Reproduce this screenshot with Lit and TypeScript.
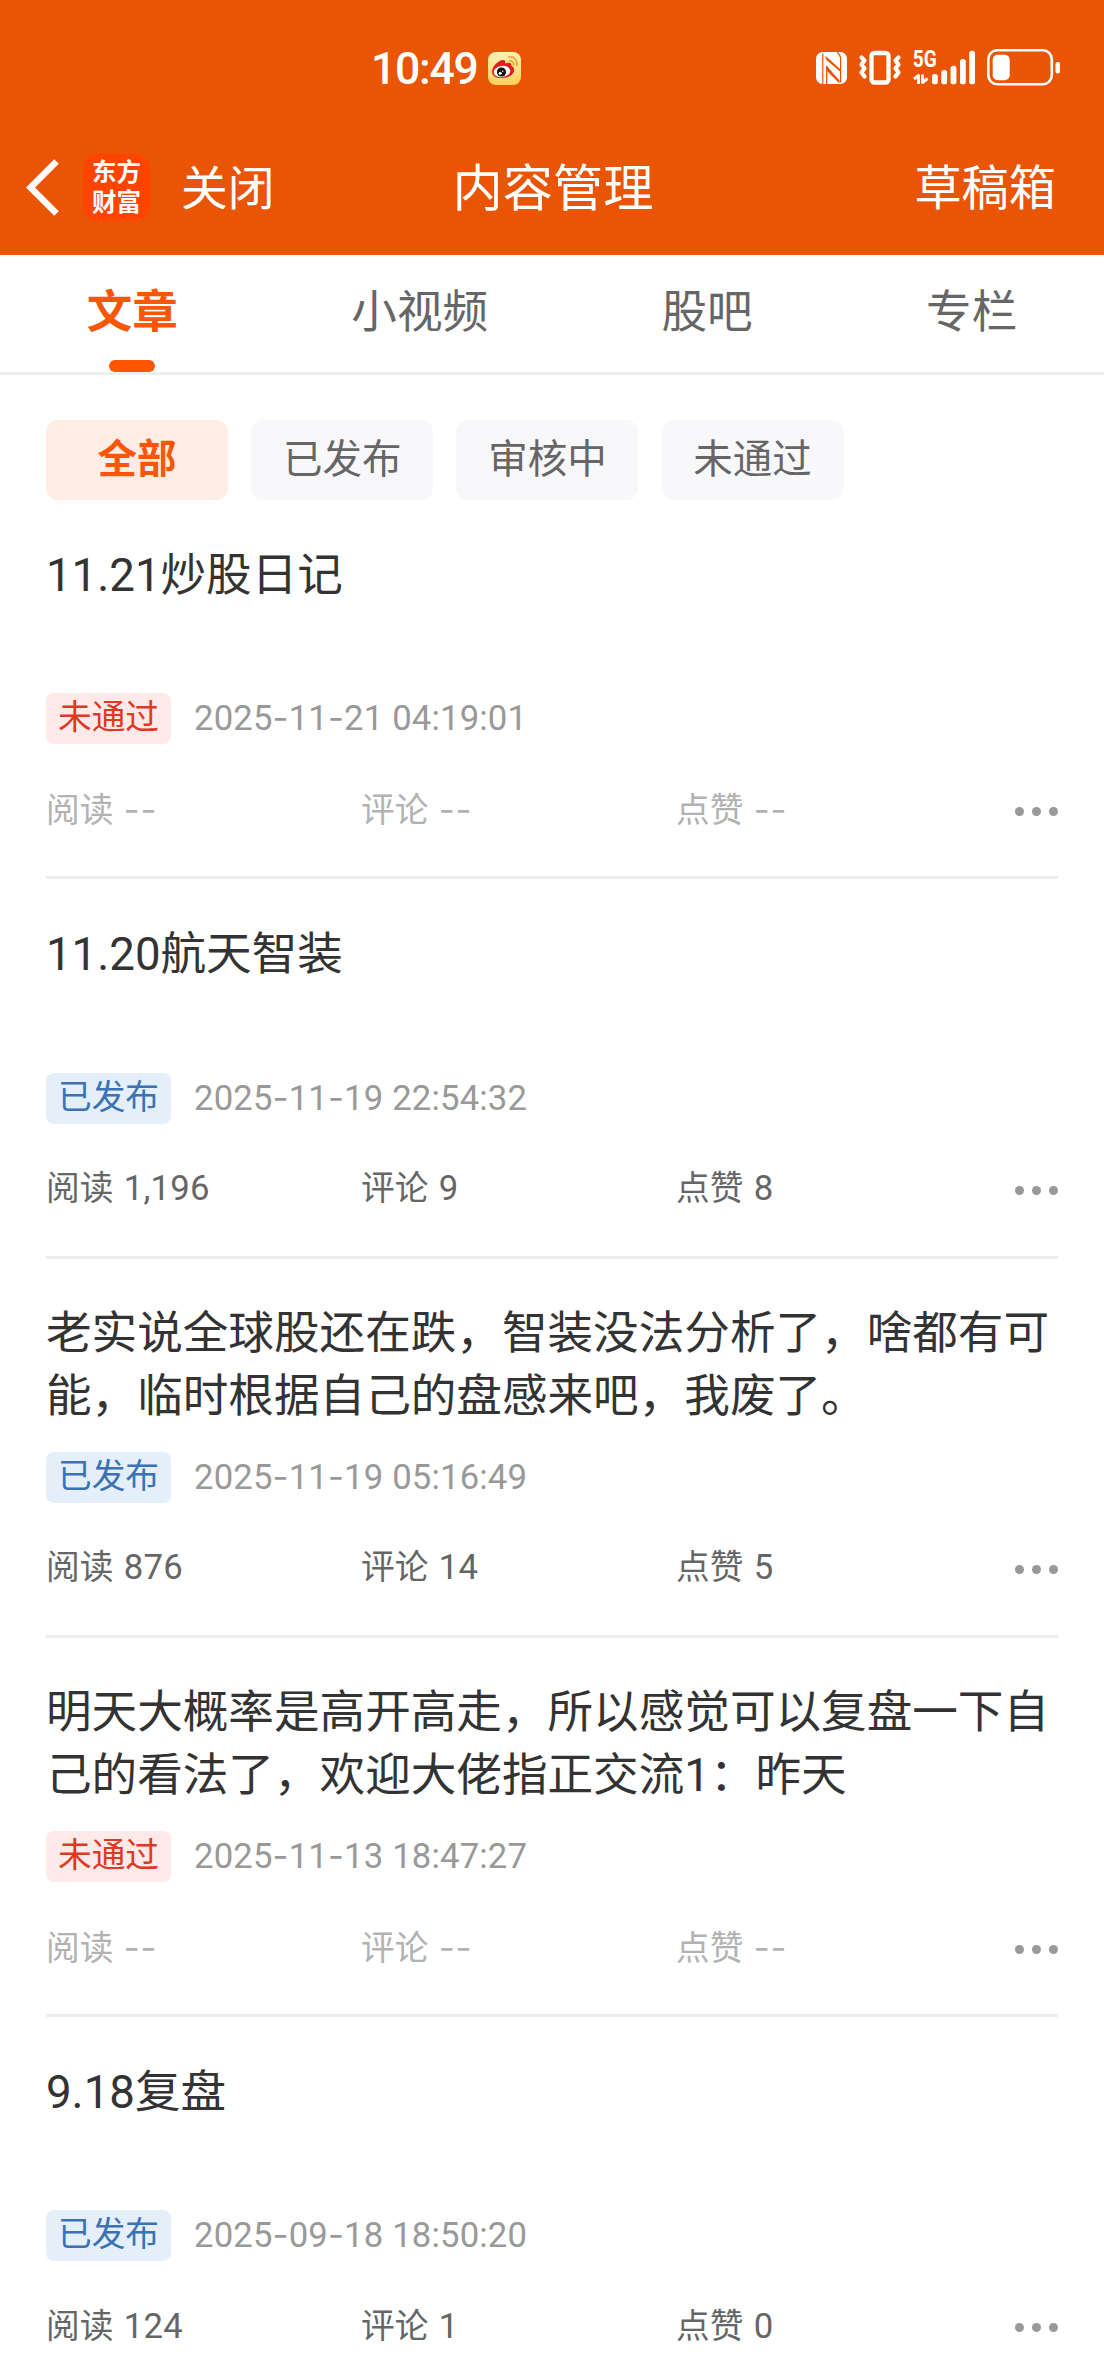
import { LitElement, html, css, svg } from "lit";
import { customElement, property } from "lit/decorators.js";
import { classMap } from "lit/directives/class-map.js";

interface Article {
  title: string;
  status: "rejected" | "published";
  time: string;
  reads: string;
  comments: string;
  likes: string;
}

const ARTICLES: Article[] = [
  { title: "11.21炒股日记", status: "rejected", time: "2025-11-21 04:19:01", reads: "--", comments: "--", likes: "--" },
  { title: "11.20航天智装", status: "published", time: "2025-11-19 22:54:32", reads: "1,196", comments: "9", likes: "8" },
  {
    title: "老实说全球股还在跌，智装没法分析了，啥都有可能，临时根据自己的盘感来吧，我废了。",
    status: "published", time: "2025-11-19 05:16:49", reads: "876", comments: "14", likes: "5",
  },
  {
    title: "明天大概率是高开高走，所以感觉可以复盘一下自己的看法了，欢迎大佬指正交流1：昨天",
    status: "rejected", time: "2025-11-13 18:47:27", reads: "--", comments: "--", likes: "--",
  },
  { title: "9.18复盘", status: "published", time: "2025-09-18 18:50:20", reads: "124", comments: "1", likes: "0" },
];

const STATUS_LABEL = { rejected: "未通过", published: "已发布" };

/* Hyphens are set in a face with a wider dash than the digits' own. */
const figures = (text: string) =>
  text.split(/(-)/).filter(Boolean).map((part) => (part === "-" ? html`<span class="dash">-</span>` : part));

@customElement("status-bar")
class StatusBar extends LitElement {
  static styles = css`
    :host { display: flex; height: 120px; }
    .time {
      margin: 42px 0 0 371px; height: 54px; line-height: 54px; width: 117px;
      font-size: 44.500px; font-weight: 500; letter-spacing: -1.300px; white-space: nowrap;
    }
    .weibo { margin-top: 52px; width: 33px; height: 33px; flex: none; }
    .system { margin: 46px 0 0 293px; width: 250px; height: 42px; flex: none; }
    svg { display: block; }
    .net { font: 700 23px Roboto, sans-serif; }
  `;

  render() {
    const bars = [
      [932, 74], [941.3, 70], [950.6, 65.7], [960, 59], [969.2, 50.8],
    ];
    return html`
      <div class="time">10:49</div>
      <svg class="weibo" viewBox="0 0 33 33">
        <defs>
          <linearGradient id="g" x1="0" y1="0" x2="0" y2="1">
            <stop offset="0" stop-color="#fff0b8" /><stop offset="1" stop-color="#fdd05c" />
          </linearGradient>
        </defs>
        <rect width="33" height="33" rx="8" fill="url(#g)" />
        <path d="M4 20C4 14 11 8 15 8c2.500 0 2.500 2 2 3.500 3-1.300 7-1.500 6.500 2.500 5 2 3.500 11-9 12C8.500 26.500 4 24 4 20z" fill="#e01f1c" />
        <ellipse cx="14" cy="19.500" rx="8.300" ry="5.600" fill="#fff" transform="rotate(-8 14 19.500)" />
        <circle cx="13.500" cy="20" r="4.600" fill="#111" />
        <circle cx="12.200" cy="21.300" r="1.500" fill="#fff" />
        <circle cx="14.800" cy="19.300" r=".7" fill="#fff" />
        <path d="M21.500 9c2.800-.4 4.500 1.700 3.800 4.500M21 5c4.800-1 8.700 3.300 7.700 8.300" fill="none" stroke="#f3ae3b" stroke-width="2" stroke-linecap="round" />
      </svg>
      <svg class="system" viewBox="814 46 250 42">
        <rect x="816" y="52" width="31" height="32" rx="6.500" fill="#fff" />
        <path d="M822.800 53.500V84M840.600 82.500V58q-.3-3-3.800-6.500" fill="none" stroke="#e95504" stroke-width="1.200" />
        <path d="M825.200 55.500L840.600 69.500V72L826.500 60zM826.500 65.500L839.500 80.500V83.500L826.500 70.500z" fill="#e95504" />
        <path d="M826.700 66V84" fill="none" stroke="#e95504" stroke-width="1.300" />
        <rect x="871.500" y="53" width="17" height="29.500" rx="3" fill="none" stroke="#fff" stroke-width="4.300" />
        <path d="M861.500 57.500l3 3-3 4 3 4-3 4 3 4M898.500 57.500l-3 3 3 4-3 4 3 4-3 4" fill="none" stroke="#fff" stroke-width="4.200" stroke-linecap="round" stroke-linejoin="round" />
        <text class="net" x="912.800" y="67.300" fill="#fff" textLength="24" lengthAdjust="spacingAndGlyphs">5G</text>
        <path d="M914 79l4.500-3.500V84M922.500 74.500v8l5-4" fill="none" stroke="#fff" stroke-width="2.900" stroke-linejoin="round" />
        ${bars.map(([x, y]) => svg`<rect x=${x} y=${y} width="5.800" height=${84.3 - y} rx="2.600" fill="#fff" />`)}
        <rect x="988.300" y="50.300" width="63.500" height="34" rx="9" fill="none" stroke="#fff" stroke-width="2.600" />
        <rect x="992.700" y="54.700" width="17" height="25.600" rx="5" fill="#fff" />
        <rect x="1055.500" y="62" width="4.500" height="11.500" rx="2" fill="#fff" />
      </svg>
    `;
  }
}

@customElement("nav-bar")
class NavBar extends LitElement {
  static styles = css`
    :host { display: grid; grid-template-columns: 1fr auto 1fr; align-items: center; height: 135px; padding: 0 48px 0 26px; }
    .left { display: flex; align-items: center; }
    .back { width: 34px; height: 58px; display: block; }
    .logo {
      margin-left: 23px; width: 67px; height: 67px; border-radius: 15px; background: #ff4400;
      display: flex; flex-direction: column; justify-content: center; align-items: center;
      font-size: 24.500px; font-weight: 700; line-height: 29.500px;
    }
    .close { margin-left: 31px; font-size: 46.800px; }
    .title { font-size: 50.200px; margin-left: 24px; }
    .drafts { justify-self: end; font-size: 47.200px; }
    .close, .title, .drafts { line-height: 60px; padding-top: 2px; white-space: nowrap; }
  `;

  render() {
    return html`
      <div class="left">
        <svg class="back" viewBox="0 0 34 58">
          <path d="M30.500 2.500L4.500 28.500 30.500 54.500" fill="none" stroke="#fff" stroke-width="6.500" />
        </svg>
        <div class="logo"><span>东方</span><span>财富</span></div>
        <span class="close">关闭</span>
      </div>
      <span class="title">内容管理</span>
      <span class="drafts">草稿箱</span>
    `;
  }
}

@customElement("article-item")
class ArticleItem extends LitElement {
  @property({ attribute: false }) article!: Article;

  static styles = css`
    :host { display: block; margin: 0 46px; padding-top: 44.500px; border-bottom: 3px solid #ededed; }
    .title { height: 122.800px; font-size: 45.600px; line-height: 62.700px; color: #333; margin-right: -6px; }
    .meta { display: flex; align-items: center; margin-top: 26px; height: 51px; }
    .badge {
      width: 125px; height: 51px; box-sizing: border-box; border-radius: 8px; text-align: center;
      font-size: 33.700px; line-height: 50px; white-space: nowrap;
    }
    .rejected { background: #ffe9e9; color: #dc3a25; }
    .published { background: #e4effa; color: #3a72b4; }
    .time { margin: -3px 0 0 23px; font-size: 34.700px; letter-spacing: .15px; color: #999; white-space: nowrap; }
    .stats {
      display: grid; grid-template-columns: 315px 315px 1fr auto; align-items: center;
      height: 48px; padding: 40.500px 0 43.500px; font-size: 33.700px; line-height: 48px; color: #666;
    }
    .muted .stat { color: #b2b2b2; }
    .value { margin-left: 2px; font-size: 34.700px; letter-spacing: .25px; }
    .more { display: flex; gap: 8px; padding-top: 3px; }
    .dot { width: 9px; height: 9px; border-radius: 50%; background: #999; }
    .dash { font-family: Inter, sans-serif; }
    .value .dash { letter-spacing: .8px; }
  `;

  render() {
    const a = this.article;
    const stats = [["阅读", a.reads], ["评论", a.comments], ["点赞", a.likes]];
    return html`
      <div class="title">${a.title}</div>
      <div class="meta">
        <span class="badge ${a.status}">${STATUS_LABEL[a.status]}</span>
        <span class="time">${figures(a.time)}</span>
      </div>
      <div class=${classMap({ stats: true, muted: a.status === "rejected" })}>
        ${stats.map(([label, value]) => html`<span class="stat">${label} <span class="value">${figures(value)}</span></span>`)}
        <span class="more"><i class="dot"></i><i class="dot"></i><i class="dot"></i></span>
      </div>
    `;
  }
}

@customElement("app-root")
class AppRoot extends LitElement {
  static styles = css`
    :host {
      display: block; width: 1104px; height: 2376px; overflow: hidden; background: #fff;
      font-family: Roboto, "Noto Sans CJK SC", sans-serif; color: #333;
    }
    .header { background: #e95504; color: #fff; height: 255px; }
    .tabs { display: flex; justify-content: space-around; height: 117px; border-bottom: 3px solid #ededed; }
    .tab {
      display: flex; flex-direction: column; align-items: center; justify-content: space-between;
      font-size: 45.600px; line-height: 60px; padding-top: 28px; color: #666; white-space: nowrap;
    }
    .tab.active { color: #fa5607; font-weight: 700; }
    .mark { width: 46px; height: 12px; border-radius: 6px; background: #ff5500; }
    .filters { display: flex; gap: 23.200px; padding: 45px 46px 0; }
    .chip {
      width: 182px; height: 80px; border-radius: 12px; background: #f8f8fa; color: #666;
      text-align: center; font-size: 39.500px; line-height: 79px; white-space: nowrap;
    }
    .chip.active { background: #ffede5; color: #fa5607; font-weight: 700; }
  `;

  render() {
    const tabs = ["文章", "小视频", "股吧", "专栏"];
    const chips = ["全部", "已发布", "审核中", "未通过"];
    return html`
      <div class="header"><status-bar></status-bar><nav-bar></nav-bar></div>
      <div class="tabs">
        ${tabs.map((t, i) => html`<div class=${classMap({ tab: true, active: i === 0 })}>
          <span>${t}</span>${i === 0 ? html`<i class="mark"></i>` : ""}
        </div>`)}
      </div>
      <div class="filters">
        ${chips.map((c, i) => html`<div class=${classMap({ chip: true, active: i === 0 })}>${c}</div>`)}
      </div>
      ${ARTICLES.map((a) => html`<article-item .article=${a}></article-item>`)}
    `;
  }
}
